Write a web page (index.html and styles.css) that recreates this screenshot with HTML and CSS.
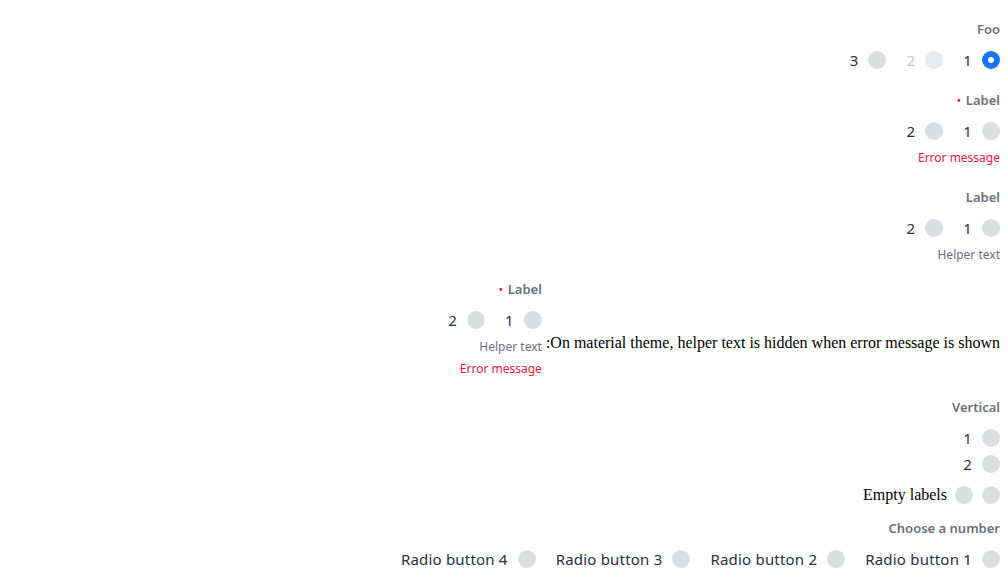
FILE: index.html
```html
<!DOCTYPE html>
<html lang="en" dir="rtl">
<head>
<meta charset="utf-8">
<title>Radio groups</title>
<link rel="stylesheet" href="styles.css">
</head>
<body>
<div class="page">
  <div class="group g1">
    <div class="label">Foo</div>
    <div class="radios">
      <label class="radio"><span class="dot checked"></span><span class="text">1</span></label>
      <label class="radio disabled"><span class="dot"></span><span class="text">2</span></label>
      <label class="radio"><span class="dot"></span><span class="text">3</span></label>
    </div>
  </div>

  <div class="group g2">
    <div class="label">Label<span class="req">•</span></div>
    <div class="radios">
      <label class="radio"><span class="dot"></span><span class="text">1</span></label>
      <label class="radio"><span class="dot"></span><span class="text">2</span></label>
    </div>
    <div class="msg error">Error message</div>
  </div>

  <div class="group g3">
    <div class="label">Label</div>
    <div class="radios">
      <label class="radio"><span class="dot"></span><span class="text">1</span></label>
      <label class="radio"><span class="dot"></span><span class="text">2</span></label>
    </div>
    <div class="msg helper">Helper text</div>
  </div>

  <div class="note-row">
    <span class="note">On material theme, helper text is hidden when error message is shown:</span>
    <div class="group g4">
      <div class="label">Label<span class="req">•</span></div>
      <div class="radios">
        <label class="radio"><span class="dot"></span><span class="text">1</span></label>
        <label class="radio"><span class="dot"></span><span class="text">2</span></label>
      </div>
      <div class="msg helper">Helper text</div>
      <div class="msg error">Error message</div>
    </div>
  </div>

  <div class="group g5">
    <div class="label">Vertical</div>
    <div class="radios vertical">
      <label class="radio"><span class="dot"></span><span class="text">1</span></label>
      <label class="radio"><span class="dot"></span><span class="text">2</span></label>
    </div>
  </div>

  <div class="empty-row">
    <div class="radios empty">
      <label class="radio"><span class="dot"></span></label>
      <label class="radio"><span class="dot"></span></label>
    </div>
    <span class="note">Empty labels</span>
  </div>

  <div class="group g6">
    <div class="label">Choose a number</div>
    <div class="radios">
      <label class="radio"><span class="dot"></span><span class="text">Radio button 1</span></label>
      <label class="radio"><span class="dot"></span><span class="text">Radio button 2</span></label>
      <label class="radio"><span class="dot"></span><span class="text">Radio button 3</span></label>
      <label class="radio"><span class="dot"></span><span class="text">Radio button 4</span></label>
    </div>
  </div>
</div>
</body>
</html>
```

FILE: styles.css
```css
html, body {
  background: #ffffff;
}
body {
  margin: 8px;
  font-family: "Liberation Serif", serif;
  font-size: 16px;
  color: #000;
}
.page {
  display: flex;
  flex-direction: column;
  align-items: flex-start;
  padding-top: 12px;
}
.group {
  display: flex;
  flex-direction: column;
  align-items: flex-start;
  font-family: "Noto Sans", "Open Sans", sans-serif;
}
.label {
  font-size: 13px;
  font-weight: 600;
  color: #6b6f78;
  line-height: 18px;
  display: flex;
  align-items: center;
}
.req {
  color: #f0143c;
  font-size: 10px;
  margin-right: 5px;
}
.radios {
  display: flex;
  gap: 20px;
  margin-top: 12px;
  height: 20px;
}
.radios.vertical {
  flex-direction: column;
  gap: 6px;
  height: auto;
}
.radios.empty {
  margin-top: 0;
  gap: 9px;
}
.radio {
  display: flex;
  align-items: center;
  gap: 10px;
  height: 20px;
  font-size: 15px;
  letter-spacing: 0.2px;
  color: #2a2f45;
}
.radio.disabled {
  color: #c3c6cf;
}
.dot {
  width: 18px;
  height: 18px;
  border-radius: 50%;
  background: #dadde2;
  box-sizing: border-box;
  flex: none;
}
.radio.disabled .dot {
  background: #e8eaee;
}
.dot.checked {
  background: #ffffff;
  border: 6px solid #1a73f0;
}
.msg {
  font-size: 12px;
  line-height: 16px;
  margin-top: 9px;
}
.msg + .msg {
  margin-top: 6px;
}
.helper {
  color: #6f6a80;
}
.error {
  color: #f0143c;
}
.g2 { margin-top: 21px; }
.g3 { margin-top: 22px; }
.note-row {
  display: flex;
  align-items: flex-start;
  gap: 4px;
  margin-top: 17px;
}
.note-row .note {
  margin-top: 54px;
  line-height: 18px;
}
.g5 { margin-top: 21px; }
.empty-row {
  display: flex;
  align-items: center;
  gap: 8px;
  margin-top: 11px;
  height: 20px;
}
.g6 { margin-top: 14px; }
```
